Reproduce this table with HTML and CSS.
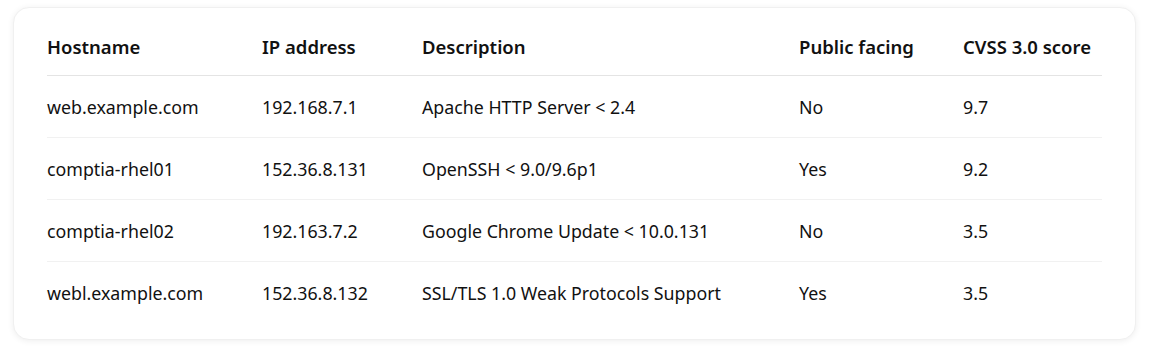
FILE: index.html
```html
<!DOCTYPE html>
<html>
<head>
    <meta charset="utf-8" />
    <title>Vulnerability scan</title>
    <link rel="stylesheet" href="styles.css">
</head>
<body>
    <div class="scan-card">
        <table class="scan-table">
            <colgroup>
                <col class="col-host">
                <col class="col-ip">
                <col class="col-desc">
                <col class="col-public">
                <col class="col-score">
            </colgroup>
            <thead>
                <tr>
                    <th>Hostname</th>
                    <th>IP address</th>
                    <th>Description</th>
                    <th>Public facing</th>
                    <th>CVSS 3.0 score</th>
                </tr>
            </thead>
            <tbody>
                <tr>
                    <td>web.example.com</td>
                    <td>192.168.7.1</td>
                    <td>Apache HTTP Server &lt; 2.4</td>
                    <td>No</td>
                    <td>9.7</td>
                </tr>
                <tr>
                    <td>comptia-rhel01</td>
                    <td>152.36.8.131</td>
                    <td>OpenSSH &lt; 9.0/9.6p1</td>
                    <td>Yes</td>
                    <td>9.2</td>
                </tr>
                <tr>
                    <td>comptia-rhel02</td>
                    <td>192.163.7.2</td>
                    <td>Google Chrome Update &lt; 10.0.131</td>
                    <td>No</td>
                    <td>3.5</td>
                </tr>
                <tr>
                    <td>webl.example.com</td>
                    <td>152.36.8.132</td>
                    <td>SSL/TLS 1.0 Weak Protocols Support</td>
                    <td>Yes</td>
                    <td>3.5</td>
                </tr>
            </tbody>
        </table>
    </div>
</body>
</html>
```

FILE: styles.css
```css
body {
    margin: 0;
    background-color: #ffffff;
    font-family: "Noto Sans", "Open Sans", sans-serif;
    color: #111111;
}

.scan-card {
    margin: 7px 19px 12px 13px;
    padding: 10px 33px 16px 33px;
    background-color: #ffffff;
    border: 1px solid #f0f0f0;
    border-radius: 16px;
    box-shadow: 0 1px 6px rgba(0, 0, 0, 0.07);
}

.scan-table {
    width: 100%;
    border-collapse: collapse;
    table-layout: fixed;
    font-size: 17.8px;
}

.col-host { width: 215px; }
.col-ip { width: 160px; }
.col-desc { width: 377px; }
.col-public { width: 164px; }

.scan-table th {
    height: 57px;
    padding: 0;
    text-align: left;
    font-size: 18.5px;
    font-weight: 600;
    border-bottom: 1px solid #e4e4e4;
}

.scan-table td {
    height: 61px;
    padding: 0;
    border-bottom: 1px solid #f1f1f1;
}

.scan-table tbody tr:last-child td {
    border-bottom: none;
}
```
